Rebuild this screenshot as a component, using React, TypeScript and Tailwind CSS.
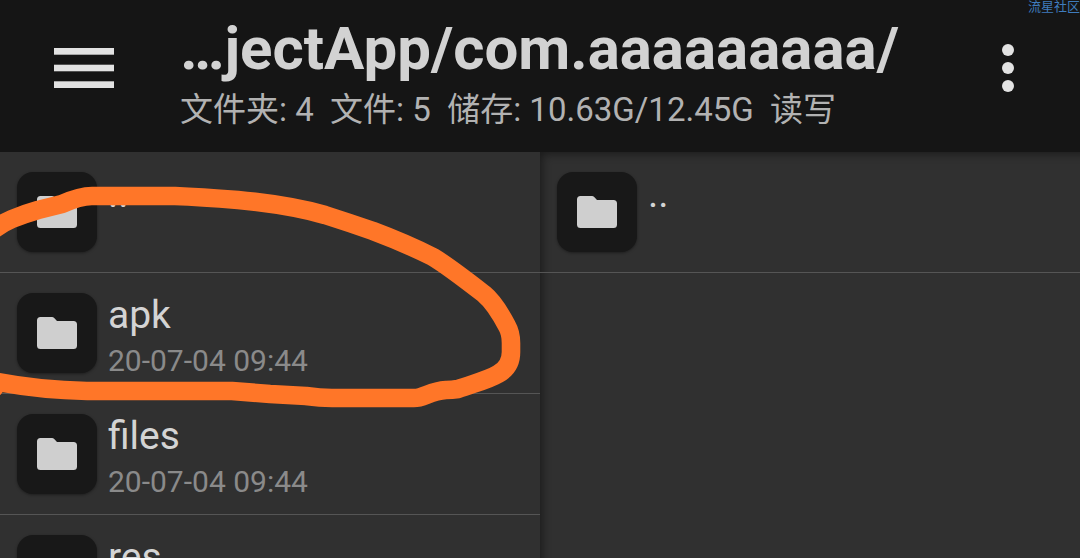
type Entry = {
  name: string;
  date?: string;
};

const leftEntries: Entry[] = [
  { name: ".." },
  { name: "apk", date: "20-07-04 09:44" },
  { name: "files", date: "20-07-04 09:44" },
  { name: "res" },
];

const rightEntries: Entry[] = [{ name: ".." }];

function FolderIcon() {
  return (
    <svg width="40" height="32" viewBox="0 0 40 32" fill="#cfcfcf" aria-hidden="true">
      <path d="M3.5 0h11.5a3 3 0 0 1 2.2 1L20 4H36.5a3.5 3.5 0 0 1 3.5 3.5v21a3.5 3.5 0 0 1-3.5 3.5H3.5a3.5 3.5 0 0 1-3.5-3.5V3.5a3.5 3.5 0 0 1 3.5-3.5z" />
    </svg>
  );
}

function EntryRow({ name, date }: Entry) {
  return (
    <li className="border-b border-[#555555]">
      <button type="button" className="flex h-[120px] w-full items-start gap-[11px] pt-5 pl-[17px] text-left">
        <span className="flex size-20 shrink-0 items-center justify-center rounded-2xl bg-[#181818] shadow-[0_1px_3px_rgba(0,0,0,0.4)]">
          <FolderIcon />
        </span>
        <span className="flex min-w-0 flex-col">
          <span className="truncate text-[39px] leading-[44px] text-[#d4d4d4]">{name}</span>
          {date && <span className="truncate text-[30px] leading-[48px] text-[#8a8a8a]">{date}</span>}
        </span>
      </button>
    </li>
  );
}

export default function App() {
  return (
    <div className="relative flex h-screen flex-col overflow-hidden bg-[#303030] font-[Roboto,'Noto_Sans_CJK_SC',sans-serif]">
      {/* HEADER */}
      <header className="flex shrink-0 items-start bg-[#151515]">
        <button type="button" aria-label="Menu" className="flex h-[136px] w-[168px] shrink-0 items-center justify-center">
          <svg width="60" height="40" viewBox="0 0 60 40" fill="#e2e2e2" aria-hidden="true">
            <rect y="0" width="60" height="6.7" />
            <rect y="16.7" width="60" height="6.6" />
            <rect y="33.3" width="60" height="6.7" />
          </svg>
        </button>
        <div className="min-w-0 flex-1 pt-[14px] pb-4 pl-3">
          <h1 className="truncate text-[60px] leading-[70px] font-bold text-[#d2d2d2]">
            …jectApp/com.aaaaaaaaa/
          </h1>
          <p className="overflow-hidden text-[33px] leading-[52px] whitespace-pre text-[#b2b2b2]">
            {"文件夹: 4  文件: 5  储存: 10.63G/12.45G  读写"}
          </p>
        </div>
        <button type="button" aria-label="More" className="flex h-[136px] w-36 shrink-0 items-center justify-center">
          <svg width="12" height="48" viewBox="0 0 12 48" fill="#e2e2e2" aria-hidden="true">
            <circle cx="6" cy="6" r="6" />
            <circle cx="6" cy="24" r="6" />
            <circle cx="6" cy="42" r="6" />
          </svg>
        </button>
      </header>

      {/* PANES */}
      <main className="grid min-h-0 flex-1 grid-cols-2">
        <ul className="min-h-0 overflow-hidden">
          {leftEntries.map((entry) => (
            <EntryRow key={entry.name} {...entry} />
          ))}
        </ul>
        <ul className="min-h-0 overflow-hidden shadow-[inset_8px_8px_10px_-6px_rgba(0,0,0,0.45)]">
          {rightEntries.map((entry) => (
            <EntryRow key={entry.name} {...entry} />
          ))}
        </ul>
      </main>

      {/* Hand-drawn marker around the apk folder */}
      <svg
        className="pointer-events-none absolute top-0 left-0"
        width="540"
        height="558"
        viewBox="0 0 540 558"
        fill="none"
        stroke="#ff7628"
        strokeWidth="18.6"
        strokeLinecap="round"
        strokeLinejoin="round"
        aria-hidden="true"
      >
        <path d="M-12 234Q0 224 12 219Q24 214 38 210L62 204Q80 196 92 196L175 196Q200 197 238 200Q290 205 325 215Q350 223 373 231Q405 243 433 257Q448 266 484 294Q495 303 507 326Q511 333 511 343V352Q511 367 498 374C488 380 475 383 458 389Q452 390 446 390C430 391 424 398 414 398H332Q320 398 306 396L270 394L232 391H87Q40 390 -2 382L-6 388" />
      </svg>

      <span className="absolute top-0 right-0 text-[13px] leading-[13px] whitespace-nowrap text-[#3f7cbd]">流星社区</span>
    </div>
  );
}
